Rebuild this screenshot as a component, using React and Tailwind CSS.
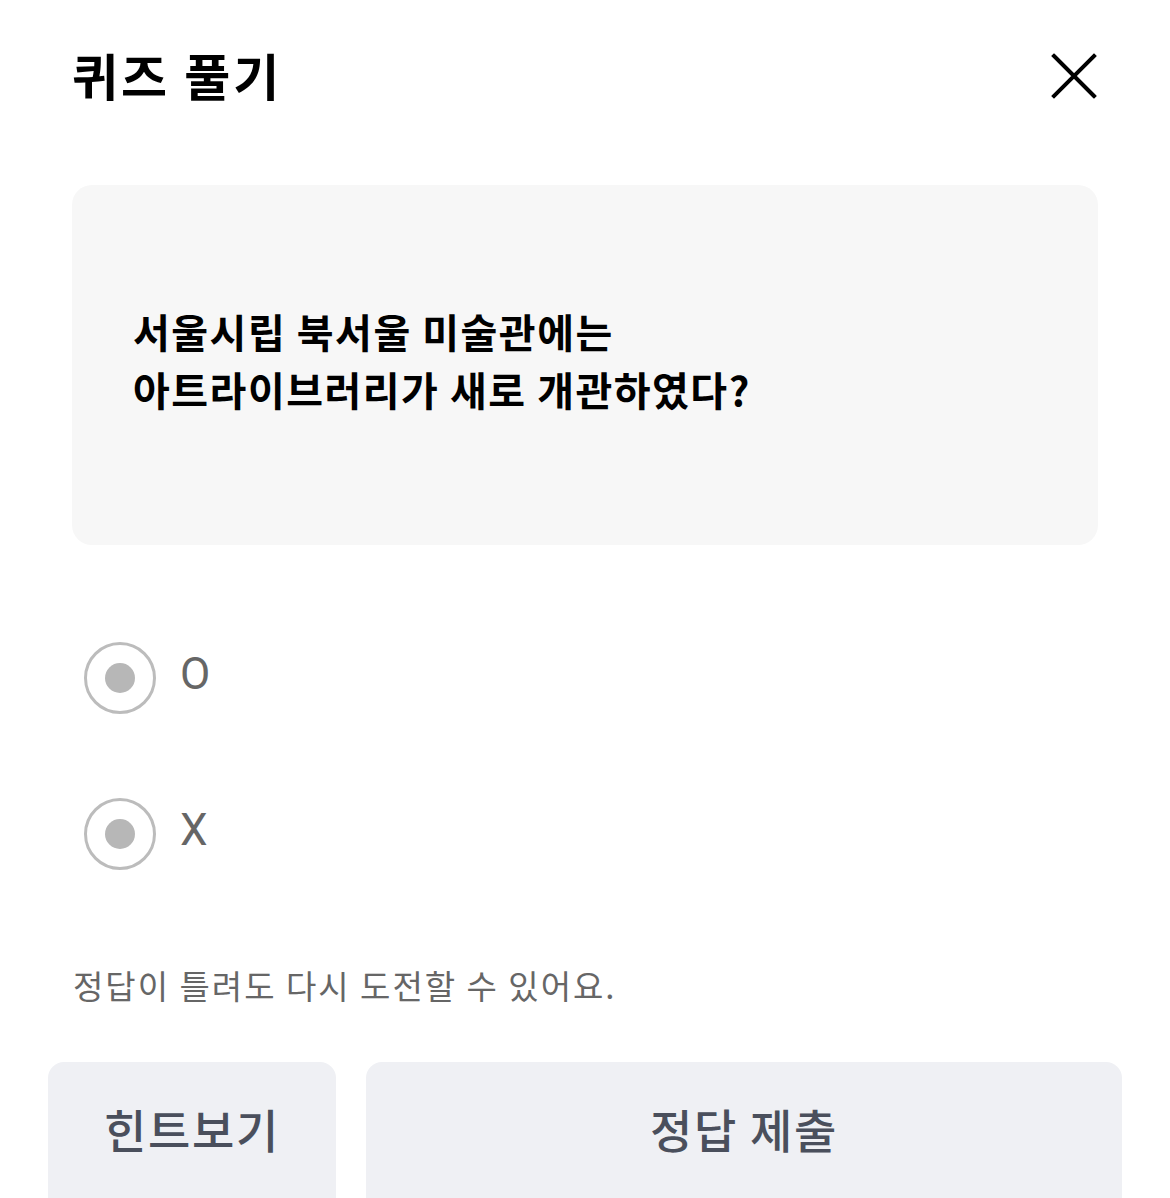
import React, { useState } from 'react';

const font = { fontFamily: '"Noto Sans CJK KR", "Noto Sans", sans-serif' };

function Radio({ label, selected, onClick }) {
  return (
    <div onClick={onClick} className="h-[156px] flex items-center pl-[84px] cursor-pointer">
      <div className="w-[72px] h-[72px] rounded-full border-[3px] border-[#bcbcbc] flex items-center justify-center">
        <div className={`w-[30px] h-[30px] rounded-full ${selected ? 'bg-[#888888]' : 'bg-[#b7b7b7]'}`} />
      </div>
      <span className="ml-[24px] mb-[8px] text-[44px] leading-none text-[#666666] font-['Roboto',sans-serif]">{label}</span>
    </div>
  );
}

export default function App() {
  const [answer, setAnswer] = useState(null);

  return (
    <div className="w-full h-[1198px] bg-white overflow-hidden" style={font}>
      {/* 헤더 */}
      <div className="h-[152px] flex items-center justify-between pl-[72px] pr-[72px]">
        <h1 className="text-[50px] font-bold tracking-[3px] text-black leading-none mb-[4px]">퀴즈 풀기</h1>
        <button className="w-[48px] h-[48px] flex items-center justify-center">
          <svg width="48" height="48" viewBox="0 0 48 48" fill="none" stroke="#000" strokeWidth="4" strokeLinecap="square">
            <path d="M4 4 L44 44 M44 4 L4 44" />
          </svg>
        </button>
      </div>

      {/* 문제 */}
      <div className="mt-[33px] mx-[72px] h-[360px] rounded-[20px] bg-[#f7f7f7] flex items-center px-[61px] pb-[10px]">
        <p className="text-[40px] font-semibold tracking-[1.5px] leading-[58px] text-black">
          서울시립 북서울 미술관에는<br />
          아트라이브러리가 새로 개관하였다?
        </p>
      </div>

      {/* 보기 */}
      <div className="mt-[55px]">
        <Radio label="O" selected={answer === 'O'} onClick={() => setAnswer('O')} />
        <Radio label="X" selected={answer === 'X'} onClick={() => setAnswer('X')} />
      </div>

      <p className="mt-[53px] px-[73px] text-[33px] tracking-[2px] leading-[40px] text-[#666666]">정답이 틀려도 다시 도전할 수 있어요.</p>

      <div className="mt-[57px] px-[48px] flex gap-[30px]">
        <button className="w-[288px] h-[170px] pt-[37px] rounded-[16px] bg-[#eff0f4] flex justify-center">
          <span className="text-[46px] font-medium tracking-[1.7px] leading-[58px] text-[#4a4f5c]">힌트보기</span>
        </button>
        <button className="flex-1 h-[170px] pt-[37px] rounded-[16px] bg-[#eff0f4] flex justify-center">
          <span className="text-[46px] font-medium tracking-[1.7px] leading-[58px] text-[#4a4f5c]">정답 제출</span>
        </button>
      </div>
    </div>
  );
}
